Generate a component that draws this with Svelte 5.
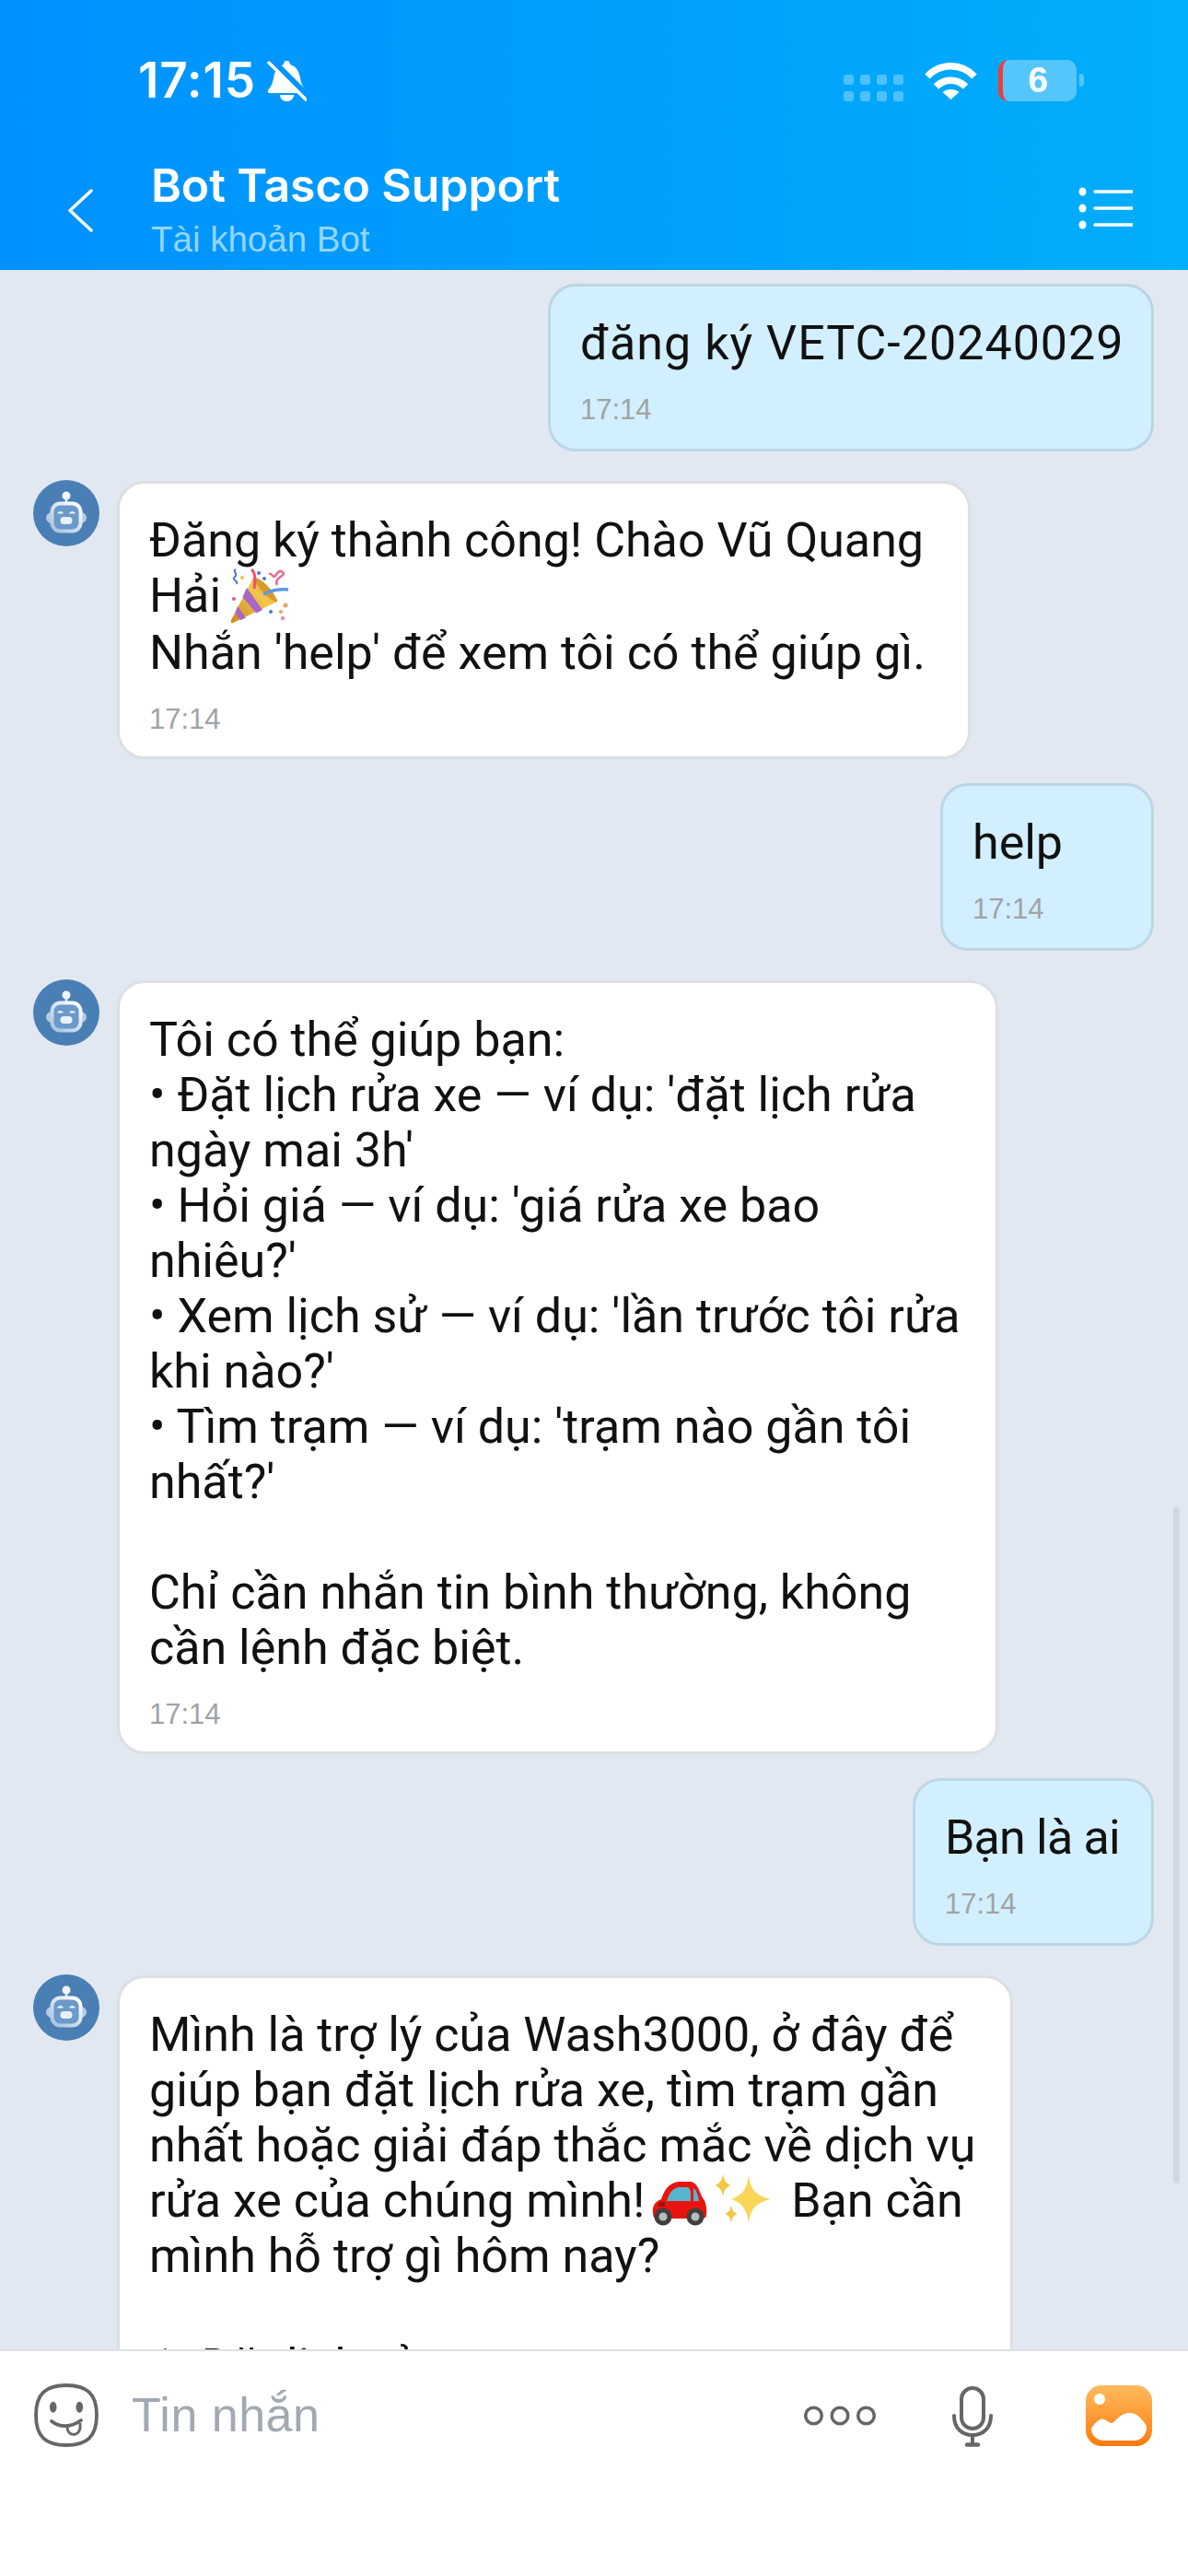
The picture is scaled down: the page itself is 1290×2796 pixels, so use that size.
<script>
  const messages = [
    { from: "me", width: 658, tracking: 1, lines: [["đăng ký VETC-20240029"]] },
    {
      from: "bot",
      width: 927,
      lines: [
        ["Đăng ký thành công! Chào Vũ Quang"],
        ["Hải ", "party"],
        ["Nhắn 'help' để xem tôi có thể giúp gì."],
      ],
    },
    { from: "me", width: 232, lines: [["help"]] },
    {
      from: "bot",
      width: 957,
      lines: [
        ["Tôi có thể giúp bạn:"],
        ["• Đặt lịch rửa xe — ví dụ: 'đặt lịch rửa"],
        ["ngày mai 3h'"],
        ["• Hỏi giá — ví dụ: 'giá rửa xe bao"],
        ["nhiêu?'"],
        ["• Xem lịch sử — ví dụ: 'lần trước tôi rửa"],
        ["khi nào?'"],
        ["• Tìm trạm — ví dụ: 'trạm nào gần tôi"],
        ["nhất?'"],
        [""],
        ["Chỉ cần nhắn tin bình thường, không"],
        ["cần lệnh đặc biệt."],
      ],
    },
    { from: "me", width: 262, tracking: -0.8, lines: [["Bạn là ai"]] },
    {
      from: "bot",
      width: 973,
      lines: [
        ["Mình là trợ lý của Wash3000, ở đây để"],
        ["giúp bạn đặt lịch rửa xe, tìm trạm gần"],
        ["nhất hoặc giải đáp thắc mắc về dịch vụ"],
        ["rửa xe của chúng mình! ", "car", "sparkles", " Bạn cần"],
        ["mình hỗ trợ gì hôm nay?"],
        [""],
        ["1. Đặt lịch rửa xe"],
      ],
    },
  ];
</script>

{#snippet robot()}
  <svg class="avatar" viewBox="0 0 72 72" aria-hidden="true">
    <defs>
      <linearGradient id="robotFace" x1="0.9" y1="0" x2="0.1" y2="1">
        <stop offset="0" stop-color="#ffffff" />
        <stop offset="1" stop-color="#a9c4e0" />
      </linearGradient>
    </defs>
    <circle cx="36" cy="36" r="36" fill="#4a7fb6" />
    <circle cx="36" cy="17" r="4.5" fill="#f2f6fb" />
    <path d="M36 20v5" stroke="#e4edf6" stroke-width="2.5" />
    <path d="M19 35c-3 1-5 3-5 6s2 5 5 6zM53 35c3 1 5 3 5 6s-2 5-5 6z" fill="#b4cbe3" />
    <rect x="20.5" y="25.5" width="31" height="30" rx="9" fill="#6b99ca" stroke="url(#robotFace)" stroke-width="4" />
    <path d="M26 36.500c1-3.500 6-3.500 7 0zM39 36.500c1-3.500 6-3.500 7 0z" fill="#eef4fa" />
    <rect x="29.500" y="40" width="13" height="8" rx="4" fill="#e8f0f8" />
  </svg>
{/snippet}

{#snippet party()}
  <svg class="emoji party" viewBox="0 0 66 62" aria-hidden="true">
    <defs>
      <linearGradient id="cone" x1="0" y1="1" x2="1" y2="0">
        <stop offset="0" stop-color="#c98a1d" />
        <stop offset="0.6" stop-color="#f2c64d" />
        <stop offset="1" stop-color="#e2a92f" />
      </linearGradient>
    </defs>
    <path d="M27 10 53 36 5 59c-2 1-3-1-2-3z" fill="url(#cone)" />
    <path d="M20 21 37 45l-7 3.5L15.500 31zM10 41l9 12.500-6 2.800L7.500 48z" fill="#a866c8" />
    <path d="M27 10c5-1 13 5 19 13s8 13 7 13c-3 1-10-4-16-11s-11-14-10-15z" fill="#d79a2a" />
    <path d="M8 1C4 3 11 6 7 9s4 5 2 8" fill="none" stroke="#4c78cf" stroke-width="2" />
    <path d="M25 1c5 4 4 12 3 21" fill="none" stroke="#e9536c" stroke-width="3" />
    <path d="M44 6c3-2 4 5 7 2s3-6 6-5 4 3 1 5-8 6-5 10" fill="none" stroke="#ea6a98" stroke-width="2.500" />
    <path d="M38 28c8-4 17-6 27-5" fill="none" stroke="#5b9be0" stroke-width="3.500" />
    <circle cx="33" cy="5" r="2" fill="#4c78cf" />
    <circle cx="15" cy="10" r="2" fill="#e8c43f" />
    <circle cx="39" cy="11" r="2" fill="#4c78cf" />
    <circle cx="46" cy="47" r="2" fill="#4c78cf" />
    <circle cx="62" cy="40" r="2.500" fill="#e6a25a" />
    <circle cx="57" cy="47" r="2" fill="#e6a25a" />
    <circle cx="59" cy="54" r="2.200" fill="#e58bb5" />
    <circle cx="6" cy="33" r="2" fill="#d4588c" />
  </svg>
{/snippet}

{#snippet car()}
  <svg class="emoji car" viewBox="0 0 62 50" aria-hidden="true">
    <path d="M2 36c-1-7 2-12 9-15 3-9 8-18 19-19h13c7 1 9 9 12 16 4 5 6 11 5 20 0 3-2 4-5 4H6c-3 0-4-3-4-6z" fill="#e8150f" />
    <path d="M17 23c2-7 6-14 13-15h9c3 0 4 4 4 8v7z" fill="#58b4cc" />
    <path d="M46 23V9c3 1 5 8 6 14z" fill="#58b4cc" />
    <path d="M8 24h7v5H8z" fill="#a80e0a" />
    <circle cx="13" cy="40" r="9.500" fill="#3f3f3f" />
    <circle cx="13" cy="40" r="4.500" fill="#b7bcc0" />
    <circle cx="48" cy="40" r="9.500" fill="#3f3f3f" />
    <circle cx="48" cy="40" r="4.500" fill="#b7bcc0" />
  </svg>
{/snippet}

{#snippet sparkles()}
  <svg class="emoji sparkles" viewBox="0 0 60 56" aria-hidden="true">
    <path d="M36 2c2 15 7 22 24 26-17 4-22 11-24 26-2-15-7-22-19-26 12-4 17-11 19-26z" fill="#f9d65a" />
    <path d="M8 0c1 8 3 10 8 13-5 3-7 5-8 13-1-8-3-10-8-13 5-3 7-5 8-13z" fill="#f7c544" />
    <path d="M17 34c1 6 2 8 7 10-5 2-6 4-7 10-1-6-2-8-7-10 5-2 6-4 7-10z" fill="#f7c544" />
  </svg>
{/snippet}

<div class="screen">
  <header class="header">
    <div class="status">
      <span class="clock">17:15</span>
      <svg class="bell" viewBox="0 0 43 45" aria-hidden="true">
        <path d="M21 1c3 0 4 2 4 4 7 2 10 8 11 15 1 6 3 9 6 13 1 2 0 3-2 3H3c-2 0-3-1-2-3 3-4 5-7 6-13 1-7 4-13 11-15 0-2 1-4 3-4z" fill="#fff" />
        <path d="M14 38h15c0 4-3 7-7.500 7S14 42 14 38z" fill="#fff" />
        <path d="M3 -1 43 39" stroke="#0094ff" stroke-width="8" />
        <path d="M2 3 42 43" stroke="#fff" stroke-width="3.500" stroke-linecap="round" />
      </svg>
      <div class="signal">
        {#each Array(8) as _}
          <i></i>
        {/each}
      </div>
      <svg class="wifi" viewBox="0 0 57 42" aria-hidden="true">
        <path d="M3 17C17 2 40 2 54 17" fill="none" stroke="#fff" stroke-width="7.500" />
        <path d="M12.500 28c9-9 23-9 32 0" fill="none" stroke="#fff" stroke-width="7.500" />
        <path d="M19.500 34c5-4 13-4 18 0l-9 8z" fill="#fff" />
      </svg>
      <div class="battery"><span>6</span></div>
      <i class="nub"></i>
    </div>
    <div class="titlebar">
      <svg class="back" viewBox="0 0 28 47" aria-hidden="true">
        <path d="M26 2 3 23.500 26 45" fill="none" stroke="#fff" stroke-width="3.500" stroke-linecap="round" stroke-linejoin="round" />
      </svg>
      <div class="titles">
        <div class="title">Bot Tasco Support</div>
        <div class="subtitle">Tài khoản Bot</div>
      </div>
      <svg class="menu" viewBox="0 0 59 46" aria-hidden="true">
        <g fill="#fff">
          <ellipse cx="4.500" cy="5" rx="4" ry="4.500" />
          <ellipse cx="4.500" cy="23" rx="4" ry="4.500" />
          <ellipse cx="4.500" cy="41" rx="4" ry="4.500" />
        </g>
        <path d="M18 5h41M18 23h41M18 41h41" stroke="#fff" stroke-width="3.500" stroke-linecap="round" />
      </svg>
    </div>
  </header>

  <main class="chat">
    {#each messages as msg}
      <div class="row {msg.from}">
        {#if msg.from === "bot"}
          {@render robot()}
        {/if}
        <div class="bubble" style="width: {msg.width}px">
          <div class="text" style="letter-spacing: {msg.tracking ?? 0}px">
            {#each msg.lines as line}
              <div class="line">
                {#each line as part}
                  {#if part === "party"}
                    {@render party()}
                  {:else if part === "car"}
                    {@render car()}
                  {:else if part === "sparkles"}
                    {@render sparkles()}
                  {:else}
                    {part}
                  {/if}
                {/each}
              </div>
            {/each}
          </div>
          <div class="time">17:14</div>
        </div>
      </div>
    {/each}
    <div class="scrollbar"></div>
  </main>

  <footer class="composer">
    <svg class="smile" viewBox="0 0 70 69" aria-hidden="true">
      <path d="M35 2c22 0 33 9 33 32.500S57 67 35 67 2 58 2 34.500 13 2 35 2z" fill="none" stroke="#666" stroke-width="3.800" />
      <ellipse cx="20.700" cy="25.700" rx="3.800" ry="6" fill="#666" />
      <ellipse cx="49.300" cy="25.700" rx="3.800" ry="6" fill="#666" />
      <path d="M19 41c9 7 21 7 32-1" fill="none" stroke="#666" stroke-width="3.800" stroke-linecap="round" />
      <path d="M36 47c0 11 13 11 14 1l0-5" fill="none" stroke="#666" stroke-width="3" />
    </svg>
    <span class="placeholder">Tin nhắn</span>
    <svg class="more" viewBox="0 0 78 22" aria-hidden="true">
      <g fill="none" stroke="#666" stroke-width="3.500">
        <circle cx="10.500" cy="11" r="8.800" />
        <circle cx="39" cy="11" r="8.800" />
        <circle cx="67.500" cy="11" r="8.800" />
      </g>
    </svg>
    <svg class="mic" viewBox="0 0 52 72" aria-hidden="true">
      <g fill="none" stroke="#666" stroke-width="4">
        <rect x="14" y="6" width="24" height="44" rx="12" />
        <path d="M6 36c0 14 9 21 20 21s20-7 20-21" stroke-linecap="round" />
        <path d="M26 57v10" />
        <path d="M20 67.500h12" stroke-width="4.500" stroke-linecap="round" />
      </g>
    </svg>
    <svg class="gallery" viewBox="0 0 72 66" aria-hidden="true">
      <defs>
        <linearGradient id="galleryFill" x1="0" y1="0" x2="0" y2="1">
          <stop offset="0" stop-color="#ffbb5e" />
          <stop offset="1" stop-color="#ff7a0c" />
        </linearGradient>
      </defs>
      <rect width="72" height="66" rx="17" fill="url(#galleryFill)" />
      <circle cx="15" cy="15" r="6" fill="#fff" />
      <path d="M6 47c3-5 8-10.500 12-10.500s6 4.500 10 4.500 8-11 20-11c8 0 14 8 18 14v2c0 8-6 14-14 14H20C12 60 6 54 6 47z" fill="#fff" />
    </svg>
  </footer>
</div>

<style>
  :global(body) {
    margin: 0;
  }

  .screen {
    width: 1290px;
    height: 2796px;
    display: flex;
    flex-direction: column;
    overflow: hidden;
    font-family: "Liberation Sans", Arial, sans-serif;
    background-color: #fff;
  }

  .header {
    height: 293px;
    flex-shrink: 0;
    box-sizing: border-box;
    padding-top: 64px;
    background: linear-gradient(90deg, #0091ff, #00aefa);
    color: #fff;
  }

  .status {
    height: 46px;
    display: flex;
    align-items: center;
    padding-left: 150px;
  }

  .clock {
    font-family: Inter, sans-serif;
    font-weight: 600;
    font-size: 53px;
    line-height: 46px;
    letter-spacing: 0.800px;
    width: 140px;
  }

  .bell {
    width: 43px;
    height: 45px;
    flex-shrink: 0;
  }

  .signal {
    margin-left: 583px;
    width: 65px;
    display: grid;
    grid-template-columns: repeat(4, 11px);
    grid-auto-rows: 11px;
    justify-content: space-between;
    row-gap: 7px;
    margin-top: 16px;
  }

  .signal i {
    border-radius: 3px;
    background-color: rgba(255, 255, 255, 0.3);
  }

  .wifi {
    width: 57px;
    height: 42px;
    margin-left: 23px;
    flex-shrink: 0;
  }

  .battery {
    width: 85px;
    height: 45px;
    margin-left: 23px;
    box-sizing: border-box;
    border-left: 5px solid #f23b3b;
    border-radius: 11px;
    background-color: rgba(255, 255, 255, 0.33);
    display: flex;
    align-items: center;
    justify-content: center;
    font-size: 39px;
    font-weight: 700;
    flex-shrink: 0;
  }

  .battery span {
    margin-right: 4px;
  }

  .nub {
    width: 5px;
    height: 14px;
    margin-left: 3px;
    border-radius: 0 4px 4px 0;
    background-color: rgba(255, 255, 255, 0.33);
  }

  .titlebar {
    display: flex;
    margin-top: 62px;
    padding-left: 73px;
    padding-right: 60px;
  }

  .back {
    width: 28px;
    height: 47px;
    margin-top: 33px;
    flex-shrink: 0;
  }

  .titles {
    flex: 1;
    margin-left: 63px;
  }

  .title {
    font-family: Inter, sans-serif;
    font-size: 50px;
    font-weight: 600;
    line-height: 58px;
    letter-spacing: -0.100px;
  }

  .subtitle {
    margin-top: 8px;
    font-size: 38.500px;
    line-height: 44px;
    color: #93d6ff;
  }

  .menu {
    width: 59px;
    height: 46px;
    margin-top: 31px;
    flex-shrink: 0;
  }

  .chat {
    position: relative;
    flex: 1;
    min-height: 0;
    overflow: hidden;
    box-sizing: border-box;
    padding: 15px 37px 0 36px;
    background-color: #e2e8f1;
  }

  .row {
    display: flex;
    align-items: flex-start;
  }

  .row.me {
    justify-content: flex-end;
    margin-top: 26px;
  }

  .row.me:first-child {
    margin-top: 0;
  }

  .row.bot {
    margin-top: 32px;
  }

  .avatar {
    width: 72px;
    height: 72px;
    margin: -1px 19px 0 0;
    flex-shrink: 0;
  }

  .bubble {
    box-sizing: border-box;
    flex-shrink: 0;
    padding: 32px 32px 20px;
    border: 3px solid #dcdfe3;
    border-radius: 30px;
    background-color: #fff;
  }

  .me .bubble {
    padding-bottom: 22px;
    border-color: #bdd5e4;
    background-color: #d2efff;
  }

  .text {
    font-family: Roboto, "Liberation Sans", sans-serif;
    font-size: 52px;
    line-height: 60px;
    color: #111;
  }

  .line {
    min-height: 60px;
    white-space: pre;
  }

  .emoji {
    display: inline-block;
  }

  .party {
    width: 66px;
    height: 62px;
    margin-left: -5px;
    vertical-align: -15px;
  }

  .car {
    width: 62px;
    height: 50px;
    vertical-align: -10px;
    margin: 0 8px 0 -6px;
  }

  .sparkles {
    width: 60px;
    height: 56px;
    vertical-align: -9px;
    margin-right: 9px;
  }

  .time {
    margin-top: 22px;
    font-size: 31px;
    line-height: 40px;
    color: #a0a3a6;
  }

  .scrollbar {
    position: absolute;
    left: 1274px;
    top: 1343px;
    width: 7px;
    height: 734px;
    border-radius: 4px;
    background-color: #d0d8e1;
  }

  .composer {
    height: 246px;
    flex-shrink: 0;
    box-sizing: border-box;
    padding: 35px 39px 0 37px;
    border-top: 2px solid #dfe1e4;
    background-color: #fff;
    display: flex;
    align-items: flex-start;
  }

  .smile {
    width: 70px;
    height: 69px;
    flex-shrink: 0;
  }

  .placeholder {
    flex: 1;
    margin-left: 36px;
    font-size: 52px;
    line-height: 69px;
    letter-spacing: 0.500px;
    color: #a2a9b1;
  }

  .more {
    width: 78px;
    height: 22px;
    margin-top: 24px;
    flex-shrink: 0;
  }

  .mic {
    width: 52px;
    height: 72px;
    margin: -1px 0 0 79px;
    flex-shrink: 0;
  }

  .gallery {
    width: 72px;
    height: 66px;
    margin: 2px 0 0 97px;
    flex-shrink: 0;
  }
</style>
